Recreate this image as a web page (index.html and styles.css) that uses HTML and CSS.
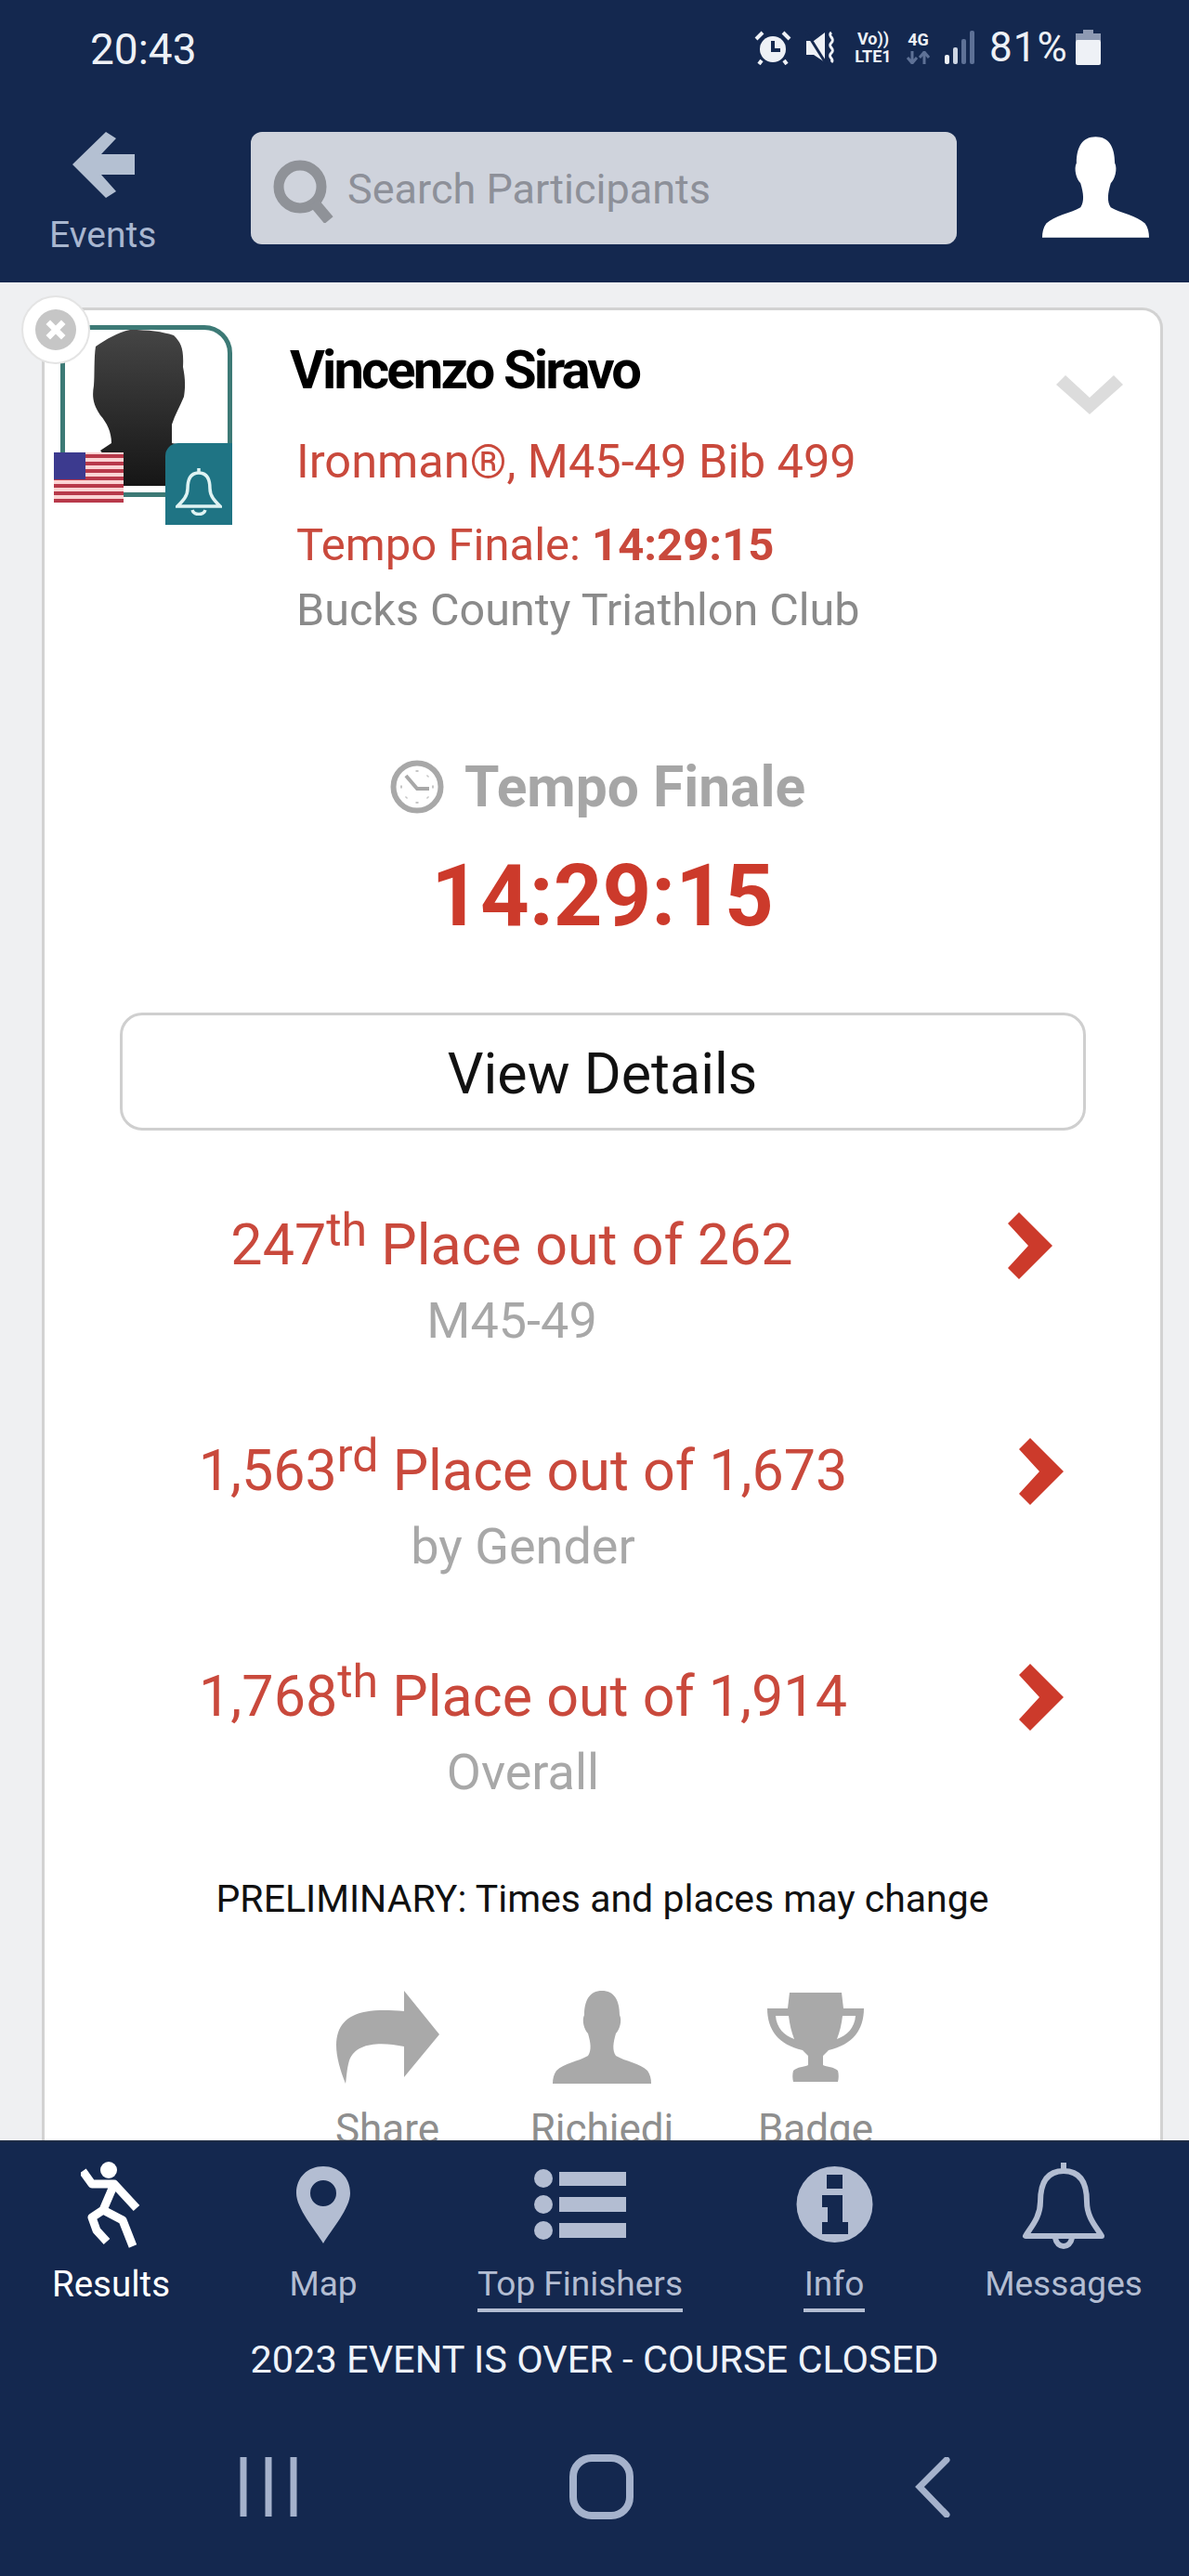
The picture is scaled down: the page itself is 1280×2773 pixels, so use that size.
FILE: index.html
```html
<!DOCTYPE html>
<html lang="en">
<head>
<meta charset="utf-8">
<title>Results</title>
<link rel="stylesheet" href="styles.css">
</head>
<body>
<div class="app">
  <header class="topbar">
    <div class="status">
      <span class="clock-time">20:43</span>
      <div class="status-icons">
        <svg class="st-alarm" viewBox="0 0 40 38"><circle cx="20" cy="21" r="14" fill="#eef1f6"/><path d="M20 12v10h8" fill="none" stroke="#14284f" stroke-width="4"/><path d="M2 10 9 3M38 10 31 3M8 33l-3 4M32 33l3 4" stroke="#eef1f6" stroke-width="4"/></svg>
        <svg class="st-mute" viewBox="0 0 33 38"><path d="M1 12h8l12 -9v32l-12 -8h-8z" fill="#eef1f6"/><path d="M0 1 22 36" stroke="#14284f" stroke-width="3"/><path d="M28 3c-5 4 5 6 0 11s5 6 0 11 4 6 0 10" fill="none" stroke="#eef1f6" stroke-width="3"/></svg>
        <div class="st-volte"><span>Vo))</span><span>LTE1</span></div>
        <div class="st-4g"><span>4G</span><svg viewBox="0 0 27 14"><path d="M7 0v12M2 7l5 6 5-6M20 14V2M15 7l5-6 5 6" fill="none" stroke="#5e7196" stroke-width="3"/></svg></div>
        <svg class="st-signal" viewBox="0 0 33 36"><rect x="0" y="26" width="5" height="10" rx="2" fill="#eef1f6"/><rect x="9" y="18" width="5" height="18" rx="2" fill="#cdd5e3"/><rect x="18" y="9" width="5" height="27" rx="2" fill="#5e7196"/><rect x="27" y="0" width="5" height="36" rx="2" fill="#5e7196"/></svg>
        <span class="st-pct">81%</span>
        <svg class="st-batt" viewBox="0 0 27 38"><rect x="8" y="0" width="11" height="5" fill="#8e9ab3"/><rect x="0" y="4" width="27" height="8" fill="#8e9ab3"/><rect x="0" y="11" width="27" height="27" rx="2" fill="#eef1f6"/></svg>
      </div>
    </div>
    <div class="toolbar">
      <div class="back">
        <svg class="back-arrow" viewBox="0 0 67 71"><path d="M36 0 47 7 31 24H67V46H31L47 64 36 71 0 35Z" fill="#b4c0d2"/></svg>
        <span class="back-label">Events</span>
      </div>
      <div class="search">
        <svg class="search-icon" viewBox="0 0 69 68"><circle cx="29" cy="29" r="23" fill="none" stroke="#8f9298" stroke-width="11"/><path d="M44 46 60 65" stroke="#8f9298" stroke-width="12"/></svg>
        <span class="search-text">Search Participants</span>
      </div>
      <svg class="profile" viewBox="0 0 106 100"><path d="M53 0C66 0 72 10 72 26 75 32 72 42 68 46 65 56 64 64 68 70 78 76 94 78 102 86 105 90 106 95 106 100L0 100C0 95 1 90 4 86 12 78 28 76 38 70 42 64 41 56 38 46 34 42 31 32 34 26 34 10 40 0 53 0Z" fill="#fff"/></svg>
    </div>
  </header>

  <main class="content">
    <article class="card">
      <section class="head">
        <div class="avatar">
          <svg class="silhouette" viewBox="0 0 175 175"><defs><linearGradient id="sil" x1="0" y1="0" x2="0" y2="1"><stop offset="0" stop-color="#454545"/><stop offset="1" stop-color="#161616"/></linearGradient></defs><path d="M70 0C90 0 105 2 117 6 125 14 128 20 127 40 129 50 130 60 128 72 124 82 118 92 115 102L115 122 130 125V168H63C62 160 50 145 38 130L50 122C50 110 45 100 38 92 30 80 29 72 31 60 32 50 31 30 33 18 45 10 56 3 70 0Z" fill="url(#sil)"/></svg>
          <button class="close" aria-label="Close"><svg viewBox="0 0 48 48"><circle cx="24" cy="24" r="24" fill="#c6c6c6"/><path d="M15 15 33 33M33 15 15 33" stroke="#fff" stroke-width="7"/></svg></button>
          <svg class="flag" viewBox="0 0 75 54"><rect width="75" height="54" fill="#fbd4d4"/><path d="M0 4H75M0 12H75M0 20H75M0 28H75M0 36H75M0 44H75M0 52H75" stroke="#b8394a" stroke-width="4"/><rect width="34" height="29" fill="#3c3a8f"/></svg>
          <div class="bell-tile"><svg viewBox="0 0 50 53"><path d="M25 7C14 7 13 17 13 24 13 32 8 37 2 43H48C42 37 37 32 37 24 37 17 36 7 25 7ZM25 2V7M18 47C20 53 30 53 32 47" fill="none" stroke="#dff3f3" stroke-width="3.5"/></svg></div>
        </div>
        <div class="who">
          <h1 class="name">Vincenzo Siravo</h1>
          <p class="line line-a">Ironman®, M45-49 Bib 499</p>
          <p class="line line-b">Tempo Finale: <b>14:29:15</b></p>
          <p class="line line-c">Bucks County Triathlon Club</p>
        </div>
        <svg class="collapse" viewBox="0 0 72 48"><path d="M0 16 10 6 36 30 62 6 72 16 36 48Z" fill="#dcdcdc"/></svg>
      </section>

      <section class="result">
        <h2 class="result-title">
          <svg class="clock" viewBox="0 0 58 58"><circle cx="29" cy="29" r="25.5" fill="#fff" stroke="#a8a8a8" stroke-width="6"/><path d="M17 17 29 31H42" fill="none" stroke="#a8a8a8" stroke-width="4"/><path d="M29 11v2M47 29h-2M29 47v-2M11 29h2M41 17l-1 1M41 41l-1-1M17 41l1-1" stroke="#c6c6c6" stroke-width="3"/></svg>
          <span>Tempo Finale</span>
        </h2>
        <div class="result-time">14:29:15</div>
        <a class="details">View Details</a>
      </section>

      <section class="ranks">
        <div class="rank rank-first">
          <div class="rank-text"><div class="rank-main">247<sup>th</sup> Place out of 262</div><div class="rank-sub">M45-49</div></div>
          <svg class="rank-go" viewBox="0 0 48 72"><path d="M12 0 48 36 12 72 0 60 22 36 0 12Z" fill="#cc3a2b"/></svg>
        </div>
        <div class="rank">
          <div class="rank-text"><div class="rank-main">1,563<sup>rd</sup> Place out of 1,673</div><div class="rank-sub">by Gender</div></div>
          <svg class="rank-go" viewBox="0 0 48 72"><path d="M12 0 48 36 12 72 0 60 22 36 0 12Z" fill="#cc3a2b"/></svg>
        </div>
        <div class="rank">
          <div class="rank-text"><div class="rank-main">1,768<sup>th</sup> Place out of 1,914</div><div class="rank-sub">Overall</div></div>
          <svg class="rank-go" viewBox="0 0 48 72"><path d="M12 0 48 36 12 72 0 60 22 36 0 12Z" fill="#cc3a2b"/></svg>
        </div>
      </section>

      <p class="prelim">PRELIMINARY: Times and places may change</p>

      <section class="actions">
        <div class="action action-share">
          <svg class="action-icon" viewBox="0 0 112 100"><path d="M74 0 112 47 74 93V60C50 55 22 55 15 75 12 85 12 95 11 100 3 80-2 60 3 45 10 25 30 18 74 22Z" fill="#a9a9a9"/></svg>
          <span>Share</span>
        </div>
        <div class="action action-req">
          <svg class="action-icon" viewBox="0 0 106 100"><path d="M53 0C66 0 72 10 72 26 75 32 72 42 68 46 65 56 64 64 68 70 78 76 94 78 102 86 105 90 106 95 106 100L0 100C0 95 1 90 4 86 12 78 28 76 38 70 42 64 41 56 38 46 34 42 31 32 34 26 34 10 40 0 53 0Z" fill="#a9a9a9"/></svg>
          <span>Richiedi</span>
        </div>
        <div class="action action-badge">
          <svg class="action-icon" viewBox="0 0 104 96"><path d="M24 0H80L82 17H104C104 40 92 56 66 62L60 68V78C64 80 72 80 76 84 77 88 77 92 76 96H28C27 92 27 88 28 84 32 80 40 80 44 78V68L38 62C12 56 0 40 0 17H22ZM9 25C10 38 18 46 29 50 26 42 24 34 23 25ZM95 25H81C80 34 78 42 75 50 86 46 94 38 95 25Z" fill="#a9a9a9" fill-rule="evenodd"/></svg>
          <span>Badge</span>
        </div>
      </section>
    </article>
  </main>

  <footer class="bottom">
    <nav class="tabs">
      <a class="tab tab-active">
        <svg class="tab-icon icon-run" viewBox="0 0 65 93"><circle cx="30" cy="9" r="9" fill="#fff"/><path d="M2 10 12 24H36L60 50M36 24 24 52 12 60 17 74 28 86M24 52 45 63 56 91" fill="none" stroke="#fff" stroke-width="9" stroke-linejoin="round"/></svg>
        <span>Results</span>
      </a>
      <a class="tab">
        <svg class="tab-icon icon-pin" viewBox="0 0 58 83"><path fill-rule="evenodd" d="M29 0C46 0 58 12 58 29 58 45 38 68 29 83 20 68 0 45 0 29 0 12 12 0 29 0ZM29 15A14 14 0 1 0 29 43 14 14 0 0 0 29 15Z" fill="#b3bdd2"/></svg>
        <span>Map</span>
      </a>
      <a class="tab tab-line">
        <svg class="tab-icon icon-list" viewBox="0 0 99 77"><g fill="#b3bdd2"><ellipse cx="10" cy="10" rx="10" ry="10"/><ellipse cx="10" cy="38" rx="10" ry="10"/><ellipse cx="10" cy="66" rx="10" ry="10"/><rect x="27" y="3" width="72" height="15"/><rect x="27" y="30" width="72" height="16"/><rect x="27" y="58" width="72" height="16"/></g></svg>
        <span>Top Finishers</span>
      </a>
      <a class="tab tab-line">
        <svg class="tab-icon icon-info" viewBox="0 0 83 82"><circle cx="41.5" cy="41" r="41" fill="#b3bdd2"/><path d="M33 9H50V24H33ZM28 31H50V60H56V73H28V60H34V44H28Z" fill="#14284f"/></svg>
        <span>Info</span>
      </a>
      <a class="tab">
        <svg class="tab-icon icon-bell" viewBox="0 0 90 97"><path d="M45 3V12M45 12C25 12 20 28 20 45 20 62 10 72 4 82H86C80 72 70 62 70 45 70 28 65 12 45 12ZM36 84C38 96 52 96 54 84" fill="none" stroke="#b3bdd2" stroke-width="6" stroke-linejoin="round"/></svg>
        <span>Messages</span>
      </a>
    </nav>
    <p class="banner">2023 EVENT IS OVER - COURSE CLOSED</p>
    <div class="sysnav">
      <svg class="sys-recent" viewBox="0 0 62 64"><path d="M4 0V64M31 0V64M58 0V64" stroke="#a5b2cc" stroke-width="7" stroke-linecap="round"/></svg>
      <svg class="sys-home" viewBox="0 0 69 70"><rect x="4" y="4" width="61" height="62" rx="20" fill="none" stroke="#a5b2cc" stroke-width="8"/></svg>
      <svg class="sys-back" viewBox="0 0 38 65"><path d="M34 3 5 32 34 62" fill="none" stroke="#a5b2cc" stroke-width="7" stroke-linecap="round"/></svg>
    </div>
  </footer>
</div>
</body>
</html>
```
FILE: styles.css
```css
* { box-sizing: border-box; }
html, body { margin: 0; padding: 0; }
body { font-family: Roboto, "Open Sans", sans-serif; background: #eff0f2; }
p, h1, h2 { margin: 0; font-weight: normal; }
.app { width: 1280px; height: 2773px; display: flex; flex-direction: column; overflow: hidden; }

/* top bar */
.topbar { height: 304px; flex: none; background: #14284f; color: #eef1f6; }
.status { height: 104px; display: flex; align-items: flex-start; justify-content: space-between; padding: 28px 95px 0 97px; }
.clock-time { font-size: 46px; line-height: 50px; }
.status-icons { display: flex; align-items: center; height: 46px; }
.status-icons svg { display: block; flex: none; }
.st-alarm { width: 40px; height: 38px; }
.st-mute { width: 33px; height: 38px; margin-left: 15px; }
.st-volte { margin-left: 17px; width: 46px; display: flex; flex-direction: column; font-size: 18px; line-height: 19px; font-weight: 700; text-align: center; }
.st-4g { margin-left: 12px; width: 27px; font-size: 18px; line-height: 20px; font-weight: 700; text-align: center; }
.st-4g svg { width: 27px; height: 14px; margin-top: 2px; }
.st-signal { width: 33px; height: 36px; margin-left: 15px; }
.st-pct { margin-left: 15px; font-size: 44px; line-height: 50px; width: 90px; letter-spacing: 1px; }
.st-batt { width: 27px; height: 38px; margin-left: 3px; }

.toolbar { display: flex; align-items: flex-start; position: relative; height: 200px; }
.back { width: 270px; flex: none; padding: 38px 0 0 53px; display: flex; flex-direction: column; }
.back-arrow { width: 67px; height: 71px; margin-left: 25px; display: block; }
.back-label { margin-top: 18px; font-size: 39px; line-height: 44px; color: #a8b6cf; }
.search { width: 760px; height: 121px; margin-top: 38px; flex: none; background: #cfd3dc; border-radius: 12px; display: flex; align-items: center; padding-left: 24px; }
.search-icon { width: 69px; height: 68px; flex: none; margin-top: 6px; }
.search-text { margin-left: 11px; font-size: 45px; line-height: 54px; padding-top: 2px; color: #8d9099; }
.profile { width: 115px; height: 109px; margin: 43px 0 0 92px; flex: none; }

/* content */
.content { flex: 1; min-height: 0; overflow: hidden; padding: 27px 28px 0 45px; }
.card { background: #fff; border: 3px solid #d2d2d2; border-bottom: 0; border-radius: 22px 22px 0 0; height: 2100px; }

.head { display: flex; align-items: flex-start; padding-left: 17px; }
.avatar { position: relative; width: 185px; height: 185px; margin-top: 16px; border: 5px solid #3d7a76; border-radius: 0 30px 0 0; flex: none; }
.silhouette { position: absolute; left: 0; top: 0; width: 175px; height: 175px; }
.close { position: absolute; left: -47px; top: -37px; width: 74px; height: 74px; padding: 13px; border: 2px solid #e4e4e4; border-radius: 50%; background: #fff; }
.close svg { display: block; width: 44px; height: 44px; }
.flag { position: absolute; left: -12px; top: 132px; width: 75px; height: 54px; }
.bell-tile { position: absolute; left: 108px; top: 122px; width: 72px; height: 88px; background: #1f7484; border-radius: 14px 0 0 0; padding: 25px 0 0 11px; }
.bell-tile svg { display: block; width: 50px; height: 53px; }
.who { margin-left: 62px; padding-top: 34px; }
.name { font-size: 58px; line-height: 60px; font-weight: 700; color: #000; letter-spacing: -2.9px; }
.line { line-height: 60px; padding-left: 7px; }
.line-a { margin-top: 39px; font-size: 50.5px; color: #c9493c; }
.line-b { margin-top: 30px; font-size: 49px; color: #c9493c; }
.line-c { margin-top: 10px; font-size: 48.5px; color: #8a8a8a; }
.collapse { width: 72px; height: 48px; margin: 64px 40px 0 auto; flex: none; }

.result { display: flex; flex-direction: column; align-items: center; margin-top: 125px; }
.result-title { display: flex; align-items: center; height: 70px; padding-right: 10px; font-size: 60.5px; font-weight: 700; color: #a6a6a6; }
.clock { width: 58px; height: 58px; margin-right: 22px; }
.result-time { margin-top: 33px; font-size: 92px; line-height: 100px; font-weight: 700; color: #cc3a2b; }
.details { display: block; margin-top: 75px; width: 1040px; height: 127px; border: 3px solid #cfcfcf; border-radius: 24px; font-size: 61px; line-height: 127px; text-align: center; color: #111; }

.ranks { margin-top: 88px; display: flex; flex-direction: column; gap: 98px; }
.rank { display: flex; align-items: flex-start; height: 145px; padding-left: 48px; }
.rank-first { margin-left: -12px; }
.rank-text { width: 934px; flex: none; text-align: center; }
.rank-main { font-size: 61px; line-height: 70px; color: #c9493c; }
.rank-main sup { font-size: 50px; line-height: 0; vertical-align: 20px; }
.rank-sub { margin-top: 17px; font-size: 54px; line-height: 60px; color: #a8a8a8; }
.rank-go { width: 48px; height: 72px; flex: none; margin-top: 0; margin-left: 67px; }

.prelim { margin-top: 83px; font-size: 41px; line-height: 50px; text-align: center; color: #111; }

.actions { margin-top: 74px; position: relative; height: 200px; display: flex; }
.action { display: flex; flex-direction: column; align-items: center; width: 200px; flex: none; font-size: 44px; line-height: 50px; color: #8e8e8e; }
.action span { margin-top: 24px; }
.action-share { margin-left: 269px; }
.action-req { margin-left: 31px; }
.action-badge { margin-left: 30px; }
.action-icon { height: 100px; display: block; }
.action-share .action-icon { width: 112px; }
.action-req .action-icon { width: 106px; }
.action-badge .action-icon { width: 104px; }

/* bottom */
.bottom { height: 469px; flex: none; background: #14284f; position: relative; border-top: 2px solid #1e2c46; }
.tabs { display: flex; align-items: flex-start; gap: 130px; padding-left: 57px; height: 190px; }
.tab { position: relative; display: flex; flex-direction: column; align-items: center; height: 182px; color: #b3bdd2; font-size: 37px; line-height: 44px; }
.tab span { position: absolute; left: 50%; top: 131px; transform: translateX(-50%); white-space: nowrap; }
.tab-active { color: #fff; width: 125px; font-size: 38.5px; }
.tab:nth-child(2) { width: 72px; }
.tab:nth-child(3) { width: 221px; }
.tab:nth-child(4) { width: 66px; }
.tab:nth-child(5) { width: 168px; }
.tab-line::after { content: ""; position: absolute; left: 0; right: 0; top: 179px; height: 4px; background: #b3bdd2; }
.tab-icon { display: block; flex: none; }
.icon-run { width: 65px; height: 93px; margin-top: 21px; }
.icon-pin { width: 58px; height: 83px; margin-top: 26px; }
.icon-list { width: 99px; height: 77px; margin-top: 29px; }
.icon-info { width: 83px; height: 82px; margin-top: 26px; }
.icon-bell { width: 90px; height: 97px; margin-top: 19px; }
.banner { margin-top: 19px; text-align: center; font-size: 41.5px; line-height: 50px; color: #eef3fb; }
.sysnav { position: absolute; left: 0; right: 0; top: 334px; height: 70px; }
.sysnav svg { position: absolute; display: block; }
.sys-recent { left: 258px; top: 5px; width: 62px; height: 64px; }
.sys-home { left: 613px; top: 2px; width: 69px; height: 70px; }
.sys-back { left: 985px; top: 5px; width: 38px; height: 65px; }
```
